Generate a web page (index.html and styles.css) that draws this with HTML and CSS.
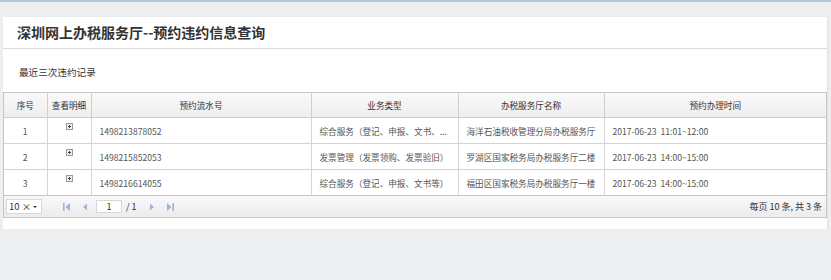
FILE: index.html
```html
<!DOCTYPE html>
<html lang="zh">
<head>
<meta charset="utf-8">
<link rel="stylesheet" href="styles.css">
</head>
<body>
<div class="topline"></div>
<div class="page">
  <div class="panel">
    <div class="panel-title">深圳网上办税服务厅--预约违约信息查询</div>
    <div class="panel-body">
      <div class="caption">最近三次违约记录</div>
      <div class="grid">
        <table>
          <colgroup>
            <col class="c1"><col class="c2"><col class="c3"><col class="c4"><col class="c5"><col class="c6">
          </colgroup>
          <thead>
            <tr><th>序号</th><th>查看明细</th><th>预约流水号</th><th>业务类型</th><th>办税服务厅名称</th><th>预约办理时间</th></tr>
          </thead>
          <tbody>
            <tr><td class="ctr">1</td><td class="ctr"><span class="plus"></span></td><td class="pad">1498213878052</td><td>综合服务（登记、申报、文书、...</td><td>海洋石油税收管理分局办税服务厅</td><td>2017-06-23&nbsp;&nbsp;11:01~12:00</td></tr>
            <tr><td class="ctr">2</td><td class="ctr"><span class="plus"></span></td><td class="pad">1498215852053</td><td>发票管理（发票领购、发票验旧）</td><td>罗湖区国家税务局办税服务厅二楼</td><td>2017-06-23&nbsp;&nbsp;14:00~15:00</td></tr>
            <tr><td class="ctr">3</td><td class="ctr"><span class="plus"></span></td><td class="pad">1498216614055</td><td>综合服务（登记、申报、文书等）</td><td>福田区国家税务局办税服务厅一楼</td><td>2017-06-23&nbsp;&nbsp;14:00~15:00</td></tr>
          </tbody>
        </table>
        <div class="pager">
          <div class="sel">10 × <span class="caret"></span></div>
          <div class="btn"><svg width="10" height="10" viewBox="0 0 10 10"><rect x="1" y="1" width="1.6" height="8" fill="#9db4d9"/><path d="M8 1 L3.5 5 L8 9 Z" fill="#9db4d9"/></svg></div>
          <div class="btn"><svg width="10" height="10" viewBox="0 0 10 10"><path d="M7 1.5 L3 5 L7 8.5 Z" fill="#9db4d9"/></svg></div>
          <div class="num">1</div>
          <div class="tot">/ 1</div>
          <div class="btn"><svg width="10" height="10" viewBox="0 0 10 10"><path d="M3 1.5 L7 5 L3 8.5 Z" fill="#9db4d9"/></svg></div>
          <div class="btn"><svg width="10" height="10" viewBox="0 0 10 10"><path d="M2 1 L6.5 5 L2 9 Z" fill="#9db4d9"/><rect x="7.4" y="1" width="1.6" height="8" fill="#9db4d9"/></svg></div>
          <div class="info">每页 10 条, 共 3 条</div>
        </div>
      </div>
    </div>
  </div>
</div>
</body>
</html>
```

FILE: styles.css
```css
html, body {
  margin: 0;
  padding: 0;
  background: #eceeef;
  font-family: "Noto Sans CJK SC", "Noto Sans", sans-serif;
  font-size: 9px;
  color: #333;
}
.topline {
  height: 2px;
  background: #b4c8e2;
}
.page {
  padding: 15px 4px 0 3px;
}
.panel {
  background: #fff;
  padding-bottom: 11px;
  box-shadow: 1px 0 1px #e2e4e6;
}
.panel-title {
  height: 31px;
  line-height: 31px;
  padding-left: 14px;
  font-size: 14px;
  font-weight: bold;
  color: #333;
  border-bottom: 1px solid #dcdcdc;
}
.panel-body {
  padding-top: 15px;
}
.caption {
  padding-left: 16px;
  height: 16px;
  line-height: 16px;
  font-size: 9.6px;
  color: #333;
  margin-bottom: 12px;
}
.grid {
  border: 1px solid #c6c6c6;
}
table {
  width: 100%;
  border-collapse: collapse;
  table-layout: fixed;
}
col.c1 { width: 43px; }
col.c2 { width: 44px; }
col.c3 { width: 220px; }
col.c4 { width: 147px; }
col.c5 { width: 146px; }
th {
  height: 24px;
  font-weight: normal;
  font-size: 8.6px;
  color: #333;
  background: linear-gradient(#f9f9f9, #eeeeee);
  border-right: 1px solid #cfcfcf;
  border-bottom: 1px solid #cfcfcf;
  text-align: center;
  padding: 0;
  white-space: nowrap;
}
th:last-child, td:last-child { border-right: none; }
td {
  height: 25px;
  font-size: 8.6px;
  color: #555;
  border-right: 1px solid #d4d4d4;
  border-bottom: 1px solid #d4d4d4;
  padding: 0 0 0 8px;
  white-space: nowrap;
  overflow: hidden;
}
tbody tr:last-child td { border-bottom: none; }
td.ctr {
  text-align: center;
  padding: 0;
}
td.pad { padding-left: 8px; }
.plus {
  display: inline-block;
  width: 5px;
  height: 5px;
  border: 1px solid #9a9a9a;
  background: #f0f0f0;
  position: relative;
  top: -5px;
}
.plus::before, .plus::after {
  content: "";
  position: absolute;
  background: #444;
}
.plus::before { left: 1px; top: 2px; width: 3px; height: 1px; }
.plus::after { left: 2px; top: 1px; width: 1px; height: 3px; }
.pager {
  height: 21px;
  border-top: 1px solid #c6c6c6;
  background: linear-gradient(#f8f8f8, #ececec);
  display: flex;
  align-items: center;
  padding: 0 4px 0 2px;
  font-size: 9px;
  color: #333;
}
.sel {
  width: 32px;
  height: 13px;
  line-height: 13px;
  background: #fff;
  border: 1px solid #d8d8d8;
  padding-left: 2px;
  position: relative;
  margin-right: 16px;
  font-size: 9.5px;
}
.caret {
  position: absolute;
  right: 4px;
  top: 6px;
  border-left: 2px solid transparent;
  border-right: 2px solid transparent;
  border-top: 2.5px solid #333;
}
.btn {
  width: 18px;
  height: 14px;
  display: flex;
  align-items: center;
  justify-content: center;
}
.num {
  width: 24px;
  height: 11px;
  line-height: 11px;
  border: 1px solid #d8d8d8;
  background: #fff;
  text-align: center;
  margin: 0 4px 0 2px;
}
.tot {
  margin-right: 6px;
}
.info {
  margin-left: auto;
}
```
